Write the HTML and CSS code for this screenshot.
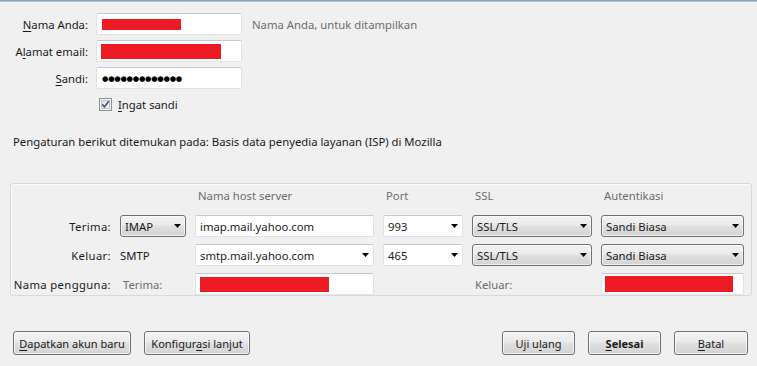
FILE: index.html
```html
<!DOCTYPE html>
<html lang="id">
<head>
<meta charset="utf-8">
<title>Pengaturan Akun Surat</title>
<link rel="stylesheet" href="styles.css">
</head>
<body>
<div class="topline"></div>
<main class="page">
  <div class="ident">
    <label class="lbl"><u>N</u>ama Anda:</label>
    <div class="field"><span class="redact redact-name"></span></div>
    <span class="hint">Nama Anda, untuk ditampilkan</span>

    <label class="lbl">A<u>l</u>amat email:</label>
    <div class="field"><span class="redact redact-email"></span></div>
    <span></span>

    <label class="lbl"><u>S</u>andi:</label>
    <div class="field"><span class="dots">&#9679;&#9679;&#9679;&#9679;&#9679;&#9679;&#9679;&#9679;&#9679;&#9679;&#9679;&#9679;&#9679;</span></div>
    <span></span>
  </div>

  <div class="remember">
    <svg class="check" width="13" height="13" viewBox="0 0 13 13">
      <defs>
        <linearGradient id="cb" x1="0" y1="0" x2="1" y2="1">
          <stop offset="0" stop-color="#dcdcdc"/>
          <stop offset="1" stop-color="#ffffff"/>
        </linearGradient>
      </defs>
      <rect x="0.5" y="0.5" width="12" height="12" fill="#f4f4f4" stroke="#8e8f8f"/>
      <rect x="2.5" y="2.5" width="8" height="8" fill="url(#cb)" stroke="#c4c4c4"/>
      <path d="M3.3 6.4 L5.4 8.9 L9.8 3.2" fill="none" stroke="#42579a" stroke-width="1.7"/>
    </svg>
    <span><u>I</u>ngat sandi</span>
  </div>

  <p class="found">Pengaturan berikut ditemukan pada: Basis data penyedia layanan (ISP) di Mozilla</p>

  <section class="box">
    <span></span><span></span>
    <span class="head">Nama host server</span>
    <span class="head">Port</span>
    <span class="head">SSL</span>
    <span class="head">Autentikasi</span>

    <span class="rlbl">Terima:</span>
    <div class="select"><span>IMAP</span><svg class="arrow" width="7" height="4" viewBox="0 0 7 4"><path d="M0 0H7L3.5 4Z"/></svg></div>
    <div class="field"><span>imap.mail.yahoo.com</span></div>
    <div class="field combo"><span>993</span><svg class="arrow" width="7" height="4" viewBox="0 0 7 4"><path d="M0 0H7L3.5 4Z"/></svg></div>
    <div class="select"><span>SSL/TLS</span><svg class="arrow" width="7" height="4" viewBox="0 0 7 4"><path d="M0 0H7L3.5 4Z"/></svg></div>
    <div class="select"><span>Sandi Biasa</span><svg class="arrow" width="7" height="4" viewBox="0 0 7 4"><path d="M0 0H7L3.5 4Z"/></svg></div>

    <span class="rlbl">Keluar:</span>
    <span class="plain">SMTP</span>
    <div class="field combo"><span>smtp.mail.yahoo.com</span><svg class="arrow" width="7" height="4" viewBox="0 0 7 4"><path d="M0 0H7L3.5 4Z"/></svg></div>
    <div class="field combo"><span>465</span><svg class="arrow" width="7" height="4" viewBox="0 0 7 4"><path d="M0 0H7L3.5 4Z"/></svg></div>
    <div class="select"><span>SSL/TLS</span><svg class="arrow" width="7" height="4" viewBox="0 0 7 4"><path d="M0 0H7L3.5 4Z"/></svg></div>
    <div class="select"><span>Sandi Biasa</span><svg class="arrow" width="7" height="4" viewBox="0 0 7 4"><path d="M0 0H7L3.5 4Z"/></svg></div>

    <span class="rlbl">Nama pengguna:</span>
    <span class="plain muted">Terima:</span>
    <div class="field"><span class="redact redact-user"></span></div>
    <span></span>
    <span class="plain muted">Keluar:</span>
    <div class="field"><span class="redact redact-out"></span></div>
  </section>

  <footer class="actions">
    <div class="group">
      <button class="btn btn-new"><u>D</u>apatkan akun baru</button>
      <button class="btn btn-adv">Konfigur<u>a</u>si lanjut</button>
    </div>
    <div class="group">
      <button class="btn btn-sm">Uji u<u>l</u>ang</button>
      <button class="btn btn-sm btn-default"><u>S</u>elesai</button>
      <button class="btn btn-sm btn-cancel"><u>B</u>atal</button>
    </div>
  </footer>
</main>
</body>
</html>
```

FILE: styles.css
```css
* { box-sizing: border-box; }

html, body {
  margin: 0;
  padding: 0;
  background: #f0f0f0;
}

body {
  width: 757px;
  height: 366px;
  overflow: hidden;
  font-family: "Noto Sans", "Open Sans", sans-serif;
  font-size: 11.3px;
  color: #1a1a1a;
}

.topline {
  height: 2px;
  background: linear-gradient(#8595ab, #c3cfdc);
}

u { text-decoration: underline; text-underline-offset: 2px; }

/* identity block */
.ident {
  display: grid;
  grid-template-columns: 88px 146px auto;
  grid-auto-rows: 22px;
  column-gap: 8px;
  row-gap: 5px;
  padding-top: 11px;
  align-items: center;
}
.ident .hint { margin-left: 2px; }

.lbl {
  text-align: right;
  white-space: nowrap;
}

.hint { color: #6d6d6d; }

.field {
  display: flex;
  align-items: center;
  height: 22px;
  padding: 0 4px;
  background: #fff;
  border: 1px solid #e0e2e7;
  border-top-color: #c6c8ce;
  border-radius: 2px;
  white-space: nowrap;
  overflow: hidden;
}

.combo { justify-content: space-between; padding-right: 4px; }

.redact {
  display: block;
  background: #ed1c24;
}
.redact-name { width: 79px; height: 11px; margin-left: 1px; }
.redact-email { width: 120px; height: 15px; }
.redact-user { width: 129px; height: 15px; }
.redact-out { width: 128px; height: 16px; margin-left: -1px; }

.dots {
  font-family: "DejaVu Sans", sans-serif;
  font-size: 7.4px;
  letter-spacing: -0.3px;
  color: #000;
  margin-left: 1px;
}

.remember {
  display: flex;
  align-items: center;
  gap: 6px;
  margin: 9px 0 0 99px;
  height: 13px;
}
.check { display: block; flex: none; }

.found {
  margin: 23px 0 0 13px;
  line-height: 16px;
}

/* server group box */
.box {
  display: grid;
  grid-template-columns: 99px 66px 179px 80px 120px 143px;
  grid-template-rows: auto 22px 22px 22px;
  column-gap: 9px;
  row-gap: 7px;
  align-items: center;
  width: 742px;
  height: 113px;
  margin: 33px 0 0 10px;
  padding: 4px 7px 0 1px;
  border: 1px solid #d9d9d9;
  border-radius: 3px;
  box-shadow: inset 1px 1px 0 #fbfbfb;
}

.head {
  color: #6d6d6d;
  line-height: 16px;
  margin-bottom: -4px;
  padding-left: 3px;
  align-self: start;
}

.rlbl {
  text-align: right;
  white-space: nowrap;
  letter-spacing: 0.35px;
}

.plain { white-space: nowrap; }
.muted { color: #6d6d6d; padding-left: 3px; }

.select {
  display: flex;
  align-items: center;
  justify-content: space-between;
  height: 22px;
  padding: 0 4px 0 4px;
  border: 1px solid #707070;
  border-radius: 3px;
  background: linear-gradient(#f2f2f2 0%, #ebebeb 45%, #e0e0e0 50%, #d3d3d3 100%);
  box-shadow: inset 0 0 0 1px rgba(255,255,255,0.7);
  white-space: nowrap;
}

.arrow { display: block; flex: none; fill: #000; }

/* buttons */
.actions {
  display: flex;
  justify-content: space-between;
  margin-top: 35px;
  padding: 0 9px 0 13px;
}
.group { display: flex; gap: 13px; }

.btn {
  height: 24px;
  padding: 0;
  font-family: "Noto Sans", "Open Sans", sans-serif;
  font-size: 11px;
  color: #1a1a1a;
  border: 1px solid #707070;
  border-radius: 3px;
  background: linear-gradient(#f2f2f2 0%, #ebebeb 45%, #e0e0e0 50%, #d3d3d3 100%);
  box-shadow: inset 0 0 0 1px rgba(255,255,255,0.7);
}
.btn-new { width: 118px; }
.btn-adv { width: 106px; }
.btn-sm { width: 73px; }
.btn-cancel { width: 74px; }
.btn-default { font-weight: bold; }
```
